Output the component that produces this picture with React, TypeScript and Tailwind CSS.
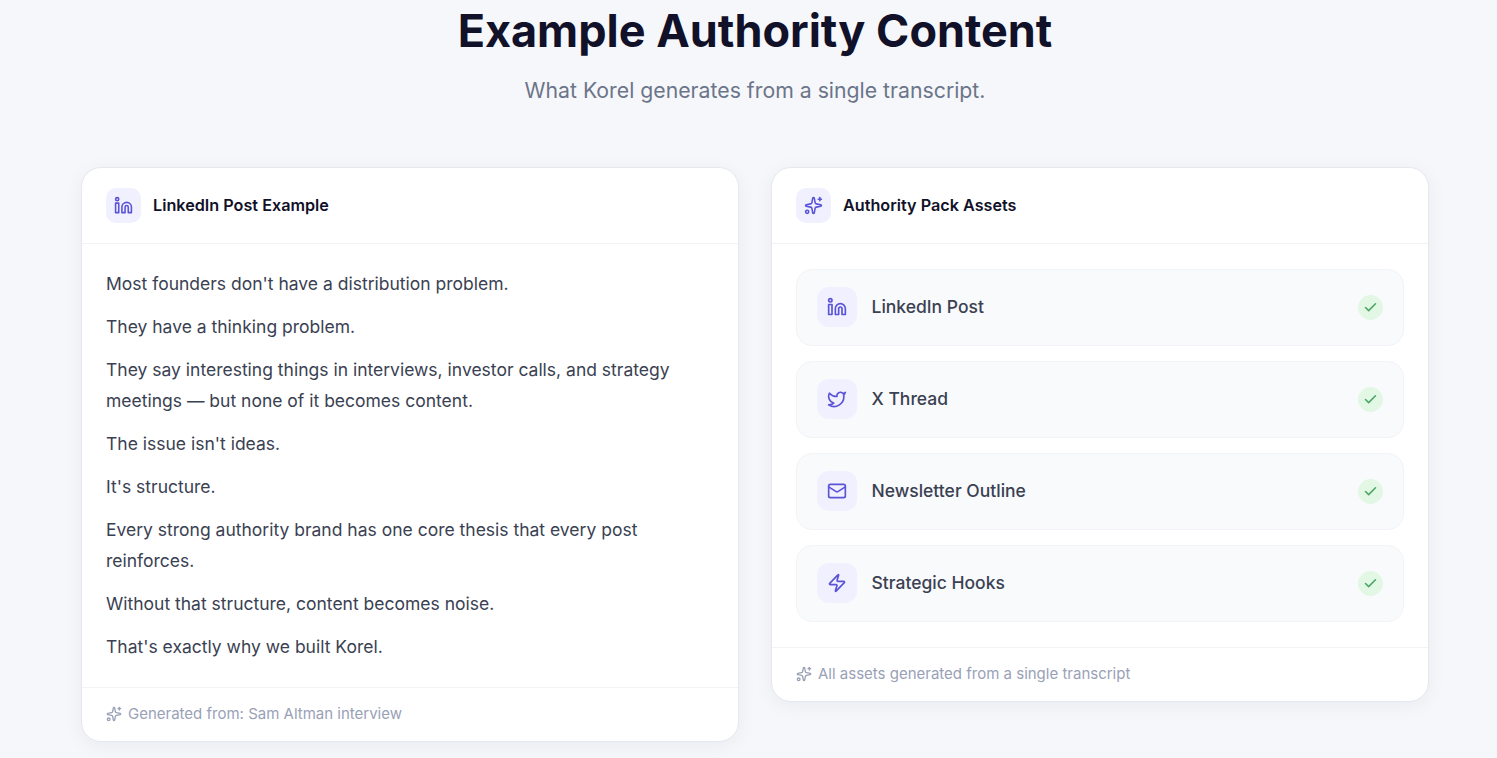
import { Check, Linkedin, Mail, Sparkles, Twitter, Zap, type LucideIcon } from "lucide-react";

const POST_LINES = [
  "Most founders don't have a distribution problem.",
  "They have a thinking problem.",
  "They say interesting things in interviews, investor calls, and strategy meetings — but none of it becomes content.",
  "The issue isn't ideas.",
  "It's structure.",
  "Every strong authority brand has one core thesis that every post reinforces.",
  "Without that structure, content becomes noise.",
  "That's exactly why we built Korel.",
];

const ASSETS: { label: string; icon: LucideIcon }[] = [
  { label: "LinkedIn Post", icon: Linkedin },
  { label: "X Thread", icon: Twitter },
  { label: "Newsletter Outline", icon: Mail },
  { label: "Strategic Hooks", icon: Zap },
];

function CardHeader({ icon: Icon, title }: { icon: LucideIcon; title: string }) {
  return (
    <div className="flex items-center gap-3 border-b border-[#f1f3f7] px-6 py-5">
      <div className="flex h-[35px] w-[35px] items-center justify-center rounded-[10px] bg-[#f0f0ff]">
        <Icon className="h-[19px] w-[19px] text-[#5b54d6]" />
      </div>
      <h3 className="text-[16.2px] font-semibold text-[#111129]">{title}</h3>
    </div>
  );
}

function CardFooter({ text }: { text: string }) {
  return (
    <div className="flex items-center gap-1.5 border-t border-[#f1f3f7] px-6 py-4 text-[15px] leading-[20.5px] text-[#99a1b7]">
      <Sparkles className="h-4 w-4" />
      <span>{text}</span>
    </div>
  );
}

export default function App() {
  return (
    <div className="min-h-[758px] bg-[#f6f7fb] pl-[81px] font-['Inter',sans-serif]">
      <div className="w-[1348px]">
        <div className="pb-[63px] text-center">
          <h2 className="text-[45px] leading-[62px] font-bold text-[#111129]">Example Authority Content</h2>
          <p className="mt-[14px] text-[21.25px] leading-[28px] text-[#6b7589]">What Korel generates from a single transcript.</p>
        </div>
        <div className="flex items-start gap-8">
          <div className="flex-1 overflow-hidden rounded-[20px] border border-[#e6e8ef] bg-white shadow-[0_4px_20px_rgba(15,23,42,0.05)]">
            <CardHeader icon={Linkedin} title="LinkedIn Post Example" />
            <div className="flex flex-col gap-3 px-6 pt-6 pb-[25px]">
              {POST_LINES.map((line) => (
                <p key={line} className="text-[17.5px] leading-[31px] text-[#3a4152]">{line}</p>
              ))}
            </div>
            <CardFooter text="Generated from: Sam Altman interview" />
          </div>
          <div className="flex-1 overflow-hidden rounded-[20px] border border-[#e6e8ef] bg-white shadow-[0_4px_20px_rgba(15,23,42,0.05)]">
            <CardHeader icon={Sparkles} title="Authority Pack Assets" />
            <div className="flex flex-col gap-[15px] px-6 pt-[25px] pb-[25px]">
              {ASSETS.map((a) => (
                <div key={a.label} className="flex items-center justify-between rounded-2xl border border-[#f1f3f7] bg-[#f9fafc] pt-[17px] pr-5 pb-[18px] pl-5">
                  <div className="flex items-center gap-[14.5px]">
                    <div className="flex h-10 w-10 items-center justify-center rounded-xl bg-[#f0f0ff]">
                      <a.icon className="h-5 w-5 text-[#5b54d6]" />
                    </div>
                    <span className="text-[17.5px] font-medium text-[#3a4152]">{a.label}</span>
                  </div>
                  <div className="flex h-[25px] w-[25px] items-center justify-center rounded-full bg-[#e2f8e5]">
                    <Check className="h-[15px] w-[15px] text-[#4ca766]" strokeWidth={2.5} />
                  </div>
                </div>
              ))}
            </div>
            <CardFooter text="All assets generated from a single transcript" />
          </div>
        </div>
      </div>
    </div>
  );
}
